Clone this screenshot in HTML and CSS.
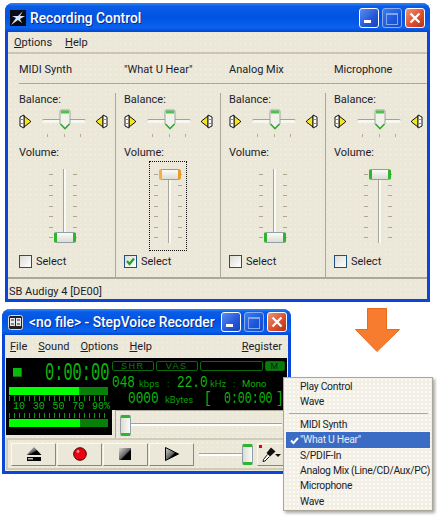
FILE: index.html
```html
<!DOCTYPE html>
<html lang="en">
<head>
    <meta charset="UTF-8">
    <title>Recording Control</title>
    <link rel="stylesheet" href="styles.css">
</head>
<body>
    <svg class="defs" width="0" height="0">
        <defs>
            <symbol id="speaker" viewBox="0 0 12 15">
                <path d="M5 2 L11.5 7 L11.5 8 L5 13 Z" fill="#f4e81c" stroke="#111" stroke-width="1"/>
                <path d="M5 1 L1 3 L1 12 L5 14 Z" fill="#fff" stroke="#111" stroke-width="1"/>
                <path d="M3 5 V6 M3 9 V10" stroke="#111"/>
            </symbol>
            <symbol id="pointer" viewBox="0 0 12 21">
                <path d="M1 2 Q1 1 2 1 H10 Q11 1 11 2 V15 L6 20 L1 15 Z" fill="#f2f2ea" stroke="#9aa5a0"/>
                <rect x="2" y="1.5" width="8" height="3" fill="#4cc24c"/>
                <path d="M1.5 15 L6 19.5 L10.5 15" fill="none" stroke="#35a835" stroke-width="1.6"/>
            </symbol>
            <symbol id="close-x" viewBox="0 0 20 20">
                <path d="M5 5 L15 15 M15 5 L5 15" stroke="#fff" stroke-width="2.6"/>
            </symbol>
            <linearGradient id="steel" x1="0" y1="0" x2="1" y2="1">
                <stop offset="0" stop-color="#d8d8d8"/>
                <stop offset="0.5" stop-color="#666"/>
                <stop offset="0.6" stop-color="#000"/>
                <stop offset="1" stop-color="#000"/>
            </linearGradient>
        </defs>
    </svg>

    <section class="window mixer">
        <header class="titlebar">
            <svg class="app-icon" width="16" height="16" viewBox="0 0 16 16">
                <rect width="16" height="16" fill="#0b0b14"/>
                <path d="M1 15 L6 8 L2 6 L8 6 L13 1 L10 6 L15 6 L10 9 L12 13 L8 10 Z" fill="#d8e4f8"/>
            </svg>
            <span class="title-text">Recording Control</span>
            <div class="win-buttons">
                <span class="win-btn min"><i></i></span>
                <span class="win-btn max off"><i></i></span>
                <span class="win-btn close"><svg width="18" height="18"><use href="#close-x"/></svg></span>
            </div>
        </header>
        <div class="client">
            <nav class="menubar mixer-menu">
                <span><u>O</u>ptions</span>
                <span><u>H</u>elp</span>
            </nav>
            <div class="names">
                <span>MIDI Synth</span>
                <span>"What U Hear"</span>
                <span>Analog Mix</span>
                <span>Microphone</span>
            </div>
            <div class="channels">
                <div class="channel">
                    <div class="label">Balance:</div>
                    <div class="balance">
                        <svg class="spk" width="12" height="15"><use href="#speaker"/></svg>
                        <div class="bal-track"><svg class="pointer" width="12" height="21"><use href="#pointer"/></svg></div>
                        <svg class="spk flip" width="12" height="15"><use href="#speaker"/></svg>
                    </div>
                    <div class="bal-ticks"><i></i><i></i><i></i></div>
                    <div class="label vol-label">Volume:</div>
                    <div class="vol-box">
                        <div class="tick-col"><i></i><i></i><i></i><i></i><i></i><i></i><i></i></div>
                        <div class="tick-col"><i></i><i></i><i></i><i></i><i></i><i></i><i></i></div>
                        <div class="vol-track"></div>
                        <div class="vol-thumb low"></div>
                    </div>
                    <label class="select"><span class="check"></span>Select</label>
                </div>
                <div class="channel">
                    <div class="label">Balance:</div>
                    <div class="balance">
                        <svg class="spk" width="12" height="15"><use href="#speaker"/></svg>
                        <div class="bal-track"><svg class="pointer" width="12" height="21"><use href="#pointer"/></svg></div>
                        <svg class="spk flip" width="12" height="15"><use href="#speaker"/></svg>
                    </div>
                    <div class="bal-ticks"><i></i><i></i><i></i></div>
                    <div class="label vol-label">Volume:</div>
                    <div class="vol-box focus">
                        <div class="tick-col"><i></i><i></i><i></i><i></i><i></i><i></i><i></i></div>
                        <div class="tick-col"><i></i><i></i><i></i><i></i><i></i><i></i><i></i></div>
                        <div class="vol-track"></div>
                        <div class="vol-thumb high active"></div>
                    </div>
                    <label class="select"><span class="check on"><svg width="11" height="11" viewBox="0 0 11 11"><path d="M2 5 L4.5 8 L9 2.5" fill="none" stroke="#21a121" stroke-width="2.2"/></svg></span>Select</label>
                </div>
                <div class="channel">
                    <div class="label">Balance:</div>
                    <div class="balance">
                        <svg class="spk" width="12" height="15"><use href="#speaker"/></svg>
                        <div class="bal-track"><svg class="pointer" width="12" height="21"><use href="#pointer"/></svg></div>
                        <svg class="spk flip" width="12" height="15"><use href="#speaker"/></svg>
                    </div>
                    <div class="bal-ticks"><i></i><i></i><i></i></div>
                    <div class="label vol-label">Volume:</div>
                    <div class="vol-box">
                        <div class="tick-col"><i></i><i></i><i></i><i></i><i></i><i></i><i></i></div>
                        <div class="tick-col"><i></i><i></i><i></i><i></i><i></i><i></i><i></i></div>
                        <div class="vol-track"></div>
                        <div class="vol-thumb low"></div>
                    </div>
                    <label class="select"><span class="check"></span>Select</label>
                </div>
                <div class="channel">
                    <div class="label">Balance:</div>
                    <div class="balance">
                        <svg class="spk" width="12" height="15"><use href="#speaker"/></svg>
                        <div class="bal-track"><svg class="pointer" width="12" height="21"><use href="#pointer"/></svg></div>
                        <svg class="spk flip" width="12" height="15"><use href="#speaker"/></svg>
                    </div>
                    <div class="bal-ticks"><i></i><i></i><i></i></div>
                    <div class="label vol-label">Volume:</div>
                    <div class="vol-box">
                        <div class="tick-col"><i></i><i></i><i></i><i></i><i></i><i></i><i></i></div>
                        <div class="tick-col"><i></i><i></i><i></i><i></i><i></i><i></i><i></i></div>
                        <div class="vol-track"></div>
                        <div class="vol-thumb high"></div>
                    </div>
                    <label class="select"><span class="check"></span>Select</label>
                </div>
            </div>
            <footer class="statusbar">SB Audigy 4 [DE00]</footer>
        </div>
    </section>

    <section class="window recorder">
        <header class="titlebar">
            <svg class="app-icon small" width="15" height="15" viewBox="0 0 15 15">
                <rect x="0.5" y="0.5" width="14" height="14" rx="2" fill="#222" stroke="#ddd"/>
                <rect x="2" y="3" width="5" height="8" fill="#e8e8e8"/>
                <rect x="8" y="3" width="5" height="8" fill="#e8e8e8"/>
                <path d="M3 5 H6 M3 9 H6 M9 5 H12 M9 9 H12" stroke="#222"/>
            </svg>
            <span class="title-text">&lt;no file&gt; - StepVoice Recorder</span>
            <div class="win-buttons">
                <span class="win-btn min"><i></i></span>
                <span class="win-btn max off"><i></i></span>
                <span class="win-btn close"><svg width="18" height="18"><use href="#close-x"/></svg></span>
            </div>
        </header>
        <div class="client">
            <nav class="menubar rec-menu">
                <span><u>F</u>ile</span>
                <span><u>S</u>ound</span>
                <span><u>O</u>ptions</span>
                <span><u>H</u>elp</span>
                <span class="register"><u>R</u>egister</span>
            </nav>
            <div class="deck">
                <div class="lcd-left">
                    <div class="clock-row">
                        <span class="led"></span>
                        <span class="seg clock">0:00:00</span>
                    </div>
                    <div class="level"><div class="level-fill"></div></div>
                    <div class="scale-ticks"></div>
                    <div class="scale-nums"><span>10</span><span>30</span><span>50</span><span>70</span><span>90%</span></div>
                    <div class="scale-ticks"></div>
                    <div class="level"><div class="level-fill wide"></div></div>
                </div>
                <div class="deck-right">
                    <div class="readouts">
                        <div class="flags">
                            <span class="flag shr">SHR</span>
                            <span class="flag vas">VAS</span>
                            <span class="flag blank"></span>
                            <span class="flag mono-flag">M</span>
                        </div>
                        <div class="read-row first">
                            <span class="seg num n48">048</span>
                            <span class="unit kbps">kbps</span>
                            <span class="unit colon">:</span>
                            <span class="seg num n22">22.0</span>
                            <span class="unit khz">kHz</span>
                            <span class="unit colon narrow">:</span>
                            <span class="unit bright">Mono</span>
                        </div>
                        <div class="read-row second">
                            <span class="seg num n0">0000</span>
                            <span class="unit kb">kBytes</span>
                            <span class="seg num brk">[</span>
                            <span class="seg num rtime">0:00:00</span>
                            <span class="seg num brk">]</span>
                        </div>
                    </div>
                    <div class="seek">
                        <div class="seek-track"></div>
                        <div class="seek-thumb"></div>
                    </div>
                </div>
            </div>
            <div class="transport">
                <button class="tbtn">
                    <svg width="16" height="14" viewBox="0 0 16 14"><path d="M8 0 L15.5 8 H0.5 Z" fill="url(#steel)"/><rect x="1" y="10" width="14" height="4" fill="#000"/><rect x="2" y="11" width="5" height="1.5" fill="#bbb"/></svg>
                </button>
                <button class="tbtn">
                    <svg width="14" height="14" viewBox="0 0 14 14"><circle cx="7" cy="7" r="6.3" fill="#ee0010" stroke="#400"/><circle cx="5" cy="4.5" r="1.4" fill="#ff8a8a"/></svg>
                </button>
                <button class="tbtn">
                    <svg width="13" height="13" viewBox="0 0 13 13"><rect width="12" height="12" fill="url(#steel)"/></svg>
                </button>
                <button class="tbtn">
                    <svg width="14" height="14" viewBox="0 0 14 14"><path d="M0.5 0.5 L13.5 7 L0.5 13.5 Z" fill="url(#steel)" stroke="#000"/></svg>
                </button>
                <div class="vol-mini">
                    <div class="mini-track"></div>
                    <div class="seek-thumb mini"></div>
                </div>
                <button class="tbtn mic">
                    <i class="rec-dot"></i>
                    <svg width="14" height="15" viewBox="0 0 14 15"><path d="M9 0.5 L13.5 4.5 L8 9.5 L4.5 6 Z" fill="#111"/><path d="M5.5 7.5 L1.5 12.5 L1 14.5 L3 14 L7.5 9.5" fill="#fff" stroke="#111"/></svg>
                    <i class="drop"></i>
                </button>
            </div>
        </div>
    </section>

    <svg class="arrow" width="46" height="45" viewBox="0 0 46 45">
        <path d="M12.5 0.5 H31.5 V21.5 H44.5 L22 43.5 L0.5 21.5 H12.5 Z" fill="#f77c2f" stroke="#ea6a1c"/>
    </svg>

    <ul class="popup">
        <li>Play Control</li>
        <li>Wave</li>
        <li class="sep"></li>
        <li>MIDI Synth</li>
        <li class="current"><svg width="9" height="9" viewBox="0 0 9 9"><path d="M1 4.5 L3.5 7 L8 2" fill="none" stroke="#fff" stroke-width="2"/></svg>"What U Hear"</li>
        <li>S/PDIF-In</li>
        <li>Analog Mix (Line/CD/Aux/PC)</li>
        <li>Microphone</li>
        <li>Wave</li>
    </ul>
</body>
</html>
```

FILE: styles.css
```css
body {
    margin: 0;
    background: #fff;
    font-family: Roboto, 'Liberation Sans', sans-serif;
    font-size: 11px;
    color: #1c1c2a;
    height: 516px;
    overflow: hidden;
    position: relative;
}

.defs {
    position: absolute;
}

/* Window frames */
.window {
    box-sizing: border-box;
    border: solid #0a47d8;
    border-width: 0 3px 3px;
    border-radius: 8px 8px 0 0;
    background-color: #ebe8da;
}

.mixer {
    width: 425px;
    height: 299px;
    margin: 3px 0 0 5px;
}

.recorder {
    width: 289px;
    height: 165px;
    margin: 7px 0 0 2px;
}

.titlebar {
    display: flex;
    align-items: center;
    margin: 0 -3px;
    border-radius: 8px 8px 0 0;
    background: linear-gradient(#2a86f2 0, #0a5be6 12%, #0054e3 50%, #0a62ee 85%, #0346cf 100%);
    color: #fff;
}

.mixer .titlebar {
    height: 29px;
    padding: 0 5px;
}

.recorder .titlebar {
    height: 26px;
    padding: 0 4px 0 6px;
}

.app-icon {
    flex: none;
}

.title-text {
    font-size: 13.8px;
    font-weight: 500;
    text-shadow: 1px 1px 0 #0a2a90;
    white-space: nowrap;
}

.mixer .title-text {
    margin-left: 4px;
}

.recorder .title-text {
    margin-left: 6px;
}

.win-buttons {
    display: flex;
    gap: 3px;
    margin-left: auto;
}

.win-btn {
    box-sizing: border-box;
    width: 20px;
    height: 20px;
    border: 1px solid #fff;
    border-radius: 3px;
    background: linear-gradient(135deg, #5a8cf0, #2456d8 60%, #1a44b8);
    display: flex;
    position: relative;
}

.win-btn.min i {
    width: 7px;
    height: 3px;
    background: #fff;
    margin: 11px 0 0 4px;
}

.win-btn.off {
    opacity: 0.7;
    border-color: #bcd0f8;
}

.win-btn.max i {
    width: 10px;
    height: 9px;
    margin: 4px 0 0 3px;
    border: 1px solid #b8c8f0;
    border-top-width: 2px;
}

.win-btn.close {
    background: linear-gradient(135deg, #ee9474, #dd5030 55%, #b83214);
}

.client {
    background-color: #ebe8da;
    background-image: radial-gradient(#f8f6e4 0.7px, transparent 0.9px);
    background-size: 5px 5px;
}

.menubar {
    display: flex;
}

.mixer-menu {
    height: 20px;
    align-items: center;
    gap: 13px;
    padding-left: 6px;
    border-bottom: 2px solid #c9c5b2;
}

.rec-menu {
    height: 23px;
    align-items: center;
    gap: 11px;
    padding: 0 6px 0 5px;
}

.register {
    margin-left: auto;
}

/* Mixer */
.names {
    box-sizing: border-box;
    height: 30px;
    padding-top: 1px;
    margin-left: 11px;
    display: grid;
    grid-template-columns: repeat(4, 105px);
    align-items: center;
    border-bottom: 1px solid #aca899;
}

.channels {
    display: flex;
    margin-top: 9px;
    height: 184px;
}

.channel {
    box-sizing: border-box;
    width: 105px;
    padding-left: 8px;
    border-right: 1px solid #aca899;
}

.channel:first-child {
    width: 108px;
    padding-left: 11px;
}

.channel:last-child {
    border-right: 0;
    width: 100px;
}

.label {
    height: 14px;
    line-height: 14px;
}

.balance {
    display: flex;
    align-items: center;
    height: 22px;
    margin-top: 3px;
}

.spk {
    flex: none;
}

.spk.flip {
    transform: scaleX(-1);
}

.bal-track {
    position: relative;
    width: 44px;
    height: 3px;
    margin: 0 10px 0 11px;
    background: #f7f7f2;
    border-top: 1px solid #a5a295;
    border-radius: 2px;
}

.pointer {
    position: absolute;
    left: 17px;
    top: -11px;
}

.bal-ticks {
    display: flex;
    justify-content: space-between;
    width: 34px;
    margin: 2px 0 0 28px;
    height: 3px;
}

.bal-ticks i {
    width: 1px;
    height: 3px;
    background: #b5ad95;
}

.vol-label {
    margin-top: 9px;
}

.vol-box {
    position: relative;
    box-sizing: border-box;
    width: 38px;
    height: 90px;
    margin: 1px 0 0 25px;
    padding: 12px 4px;
    display: flex;
    justify-content: space-between;
    border: 1px dotted transparent;
}

.vol-box.focus {
    border-color: #111;
}

.tick-col {
    display: flex;
    flex-direction: column;
    justify-content: space-between;
}

.tick-col i {
    display: block;
    width: 4px;
    height: 1px;
    background: #b0a78f;
}

.vol-track {
    position: absolute;
    left: 18px;
    top: 7px;
    width: 3px;
    height: 74px;
    background: linear-gradient(90deg, #a8a59a 1px, #fafaf5 1px);
}

.vol-thumb {
    position: absolute;
    left: 9px;
    box-sizing: border-box;
    width: 22px;
    height: 11px;
    border: 1px solid #8fa0ac;
    border-left: 3px solid #2db52d;
    border-right: 3px solid #2db52d;
    border-radius: 2px;
    background: linear-gradient(#fbfbf6, #dcdcd2);
}

.vol-thumb.high {
    top: 7px;
}

.vol-thumb.low {
    top: 70px;
}

.vol-thumb.active {
    border-left-color: #f5b041;
    border-right-color: #e89a2a;
}

.select {
    display: flex;
    align-items: center;
    gap: 4px;
    margin-top: 4px;
}

.check {
    box-sizing: border-box;
    width: 13px;
    height: 13px;
    border: 1px solid #1c5180;
    background: linear-gradient(135deg, #dcdcd6, #fff);
    display: flex;
    align-items: center;
    justify-content: center;
}

.statusbar {
    height: 22px;
    margin-top: 0;
    box-sizing: border-box;
    padding: 6px 0 0 1px;
    line-height: 14px;
    border-top: 2px solid #aca899;
}

/* Recorder display */
.deck {
    display: flex;
    height: 80px;
}

.lcd-left {
    box-sizing: border-box;
    flex: none;
    width: 106px;
    height: 77px;
    margin-left: 1px;
    padding: 0 3px;
    background: #000;
}

.clock-row {
    display: flex;
    align-items: center;
    height: 29px;
}

.led {
    flex: none;
    width: 9px;
    height: 9px;
    margin-left: 4px;
    background: #0cb80c;
    box-shadow: inset -1px -1px 0 #067a06;
}

.seg {
    font-family: 'Liberation Mono', monospace;
    color: #0cb80c;
    display: inline-block;
    flex: none;
    transform-origin: left center;
    white-space: nowrap;
}

.clock {
    width: 63px;
    margin-left: 23px;
    font-size: 26px;
    line-height: 24px;
    transform: scaleX(0.59);
}

.level {
    height: 8px;
    width: 99px;
    background: #078007;
}

.level-fill {
    width: 70px;
    height: 8px;
    background: #00ff00;
}

.level-fill.wide {
    width: 71px;
}

.scale-ticks {
    height: 5px;
    width: 99px;
    margin-top: 1px;
    background: repeating-linear-gradient(90deg, #0a9a0a 0 1px, transparent 1px 5px);
}

.scale-nums {
    display: flex;
    justify-content: space-between;
    box-sizing: border-box;
    width: 101px;
    padding-left: 4px;
    font-family: 'Liberation Mono', monospace;
    font-size: 10px;
    line-height: 11px;
    color: #0cb80c;
}

.scale-ticks + .level {
    margin-top: 1px;
}

.deck-right {
    flex: 1;
    min-width: 0;
}

.readouts {
    box-sizing: border-box;
    height: 52px;
    padding: 3px 2px 0 0;
    background: #000;
    margin-right: 1px;
}

.flags {
    display: flex;
    gap: 2px;
    height: 10px;
}

.flag {
    box-sizing: border-box;
    border: 1px solid #0a6a0a;
    border-radius: 2px;
    font-family: 'Liberation Sans', sans-serif;
    font-size: 9px;
    line-height: 8px;
    letter-spacing: 1.5px;
    text-align: center;
    color: #0a800a;
}

.shr, .vas {
    width: 42px;
}

.blank {
    width: 64px;
}

.mono-flag {
    width: 20px;
    background: #0a7a0a;
    color: #021;
}

.read-row {
    display: flex;
    align-items: center;
    height: 16px;
}

.read-row.first {
    margin-top: 4px;
}

.num {
    font-size: 17px;
    line-height: 16px;
    transform: scaleX(0.75);
}

.unit {
    flex: none;
    color: #0a9a0a;
    font-size: 9.5px;
    white-space: nowrap;
}

.unit.bright {
    color: #0cb80c;
}

.colon {
    width: 10px;
}

.colon.narrow {
    width: 9px;
}

.n48 {
    width: 27px;
}

.kbps {
    width: 28px;
}

.n22 {
    width: 33px;
}

.khz {
    width: 23px;
}

.n0 {
    width: 37px;
    margin-left: 16px;
}

.kb {
    width: 39px;
}

.brk {
    width: 20px;
}

.rtime {
    width: 52px;
    transform: scaleX(0.68);
}

.seek {
    position: relative;
    height: 27px;
    margin-left: 3px;
    border: solid #aca899;
    border-width: 1px 0 0 1px;
}

.seek-track {
    position: absolute;
    left: 14px;
    right: 6px;
    top: 12px;
    height: 2px;
    background: #fff;
    border-top: 1px solid #a5a295;
}

.seek-thumb {
    position: absolute;
    left: 4px;
    top: 4px;
    box-sizing: border-box;
    width: 11px;
    height: 21px;
    border: 1px solid #8fa0ac;
    border-top: 3px solid #2db52d;
    border-bottom: 3px solid #2db52d;
    border-radius: 2px;
    background: linear-gradient(90deg, #dcdcd2, #fbfbf6);
}

/* Recorder buttons */
.transport {
    box-sizing: border-box;
    display: flex;
    align-items: center;
    gap: 1px;
    height: 32px;
    margin: 0 0 0 1px;
    padding-left: 3px;
    border: 2px solid #cfccba;
    border-right: 0;
}

.tbtn {
    box-sizing: border-box;
    display: flex;
    align-items: center;
    justify-content: center;
    position: relative;
    width: 45px;
    height: 23px;
    padding: 0;
    background: #ebe8da;
    border: 1px solid;
    border-color: #fafaf4 #8a8778 #8a8778 #fafaf4;
    border-radius: 1px;
}

.vol-mini {
    position: relative;
    width: 57px;
    height: 23px;
    margin-left: 4px;
}

.mini-track {
    position: absolute;
    left: 0;
    right: 10px;
    top: 10px;
    height: 2px;
    background: #fff;
    border-top: 1px solid #a5a295;
}

.seek-thumb.mini {
    left: 43px;
    top: 1px;
}

.tbtn.mic {
    width: 27px;
    justify-content: flex-start;
    padding-left: 4px;
}

.rec-dot {
    position: absolute;
    left: 1px;
    top: 1px;
    width: 3px;
    height: 3px;
    background: #e00;
}

.drop {
    position: absolute;
    right: 2px;
    top: 10px;
    border: 3px solid transparent;
    border-top: 3px solid #111;
    border-bottom: 0;
}

/* Overlays */
.arrow {
    position: absolute;
    left: 355px;
    top: 308px;
}

.popup {
    position: absolute;
    left: 283px;
    top: 377px;
    box-sizing: border-box;
    width: 150px;
    height: 134px;
    margin: 0;
    padding: 1px 2px 0;
    list-style: none;
    background-color: #f2f0e6;
    background-image: radial-gradient(#fbfaf2 0.7px, transparent 0.9px);
    background-size: 4px 4px;
    border: 1px solid #aca899;
    box-shadow: 2px 2px 3px rgba(0, 0, 0, 0.35);
}

.popup li {
    height: 15.4px;
    line-height: 15.4px;
    padding-left: 14px;
    position: relative;
    white-space: nowrap;
    font-size: 10.4px;
    letter-spacing: -0.3px;
}

.popup .sep {
    height: 1px;
    margin: 3px 2px 3px 3px;
    padding: 0;
    background: #aca899;
}

.popup .current {
    background: #3a6cc5;
    color: #e4eaf8;
}

.popup .current svg {
    position: absolute;
    left: 4px;
    top: 4px;
}
```
